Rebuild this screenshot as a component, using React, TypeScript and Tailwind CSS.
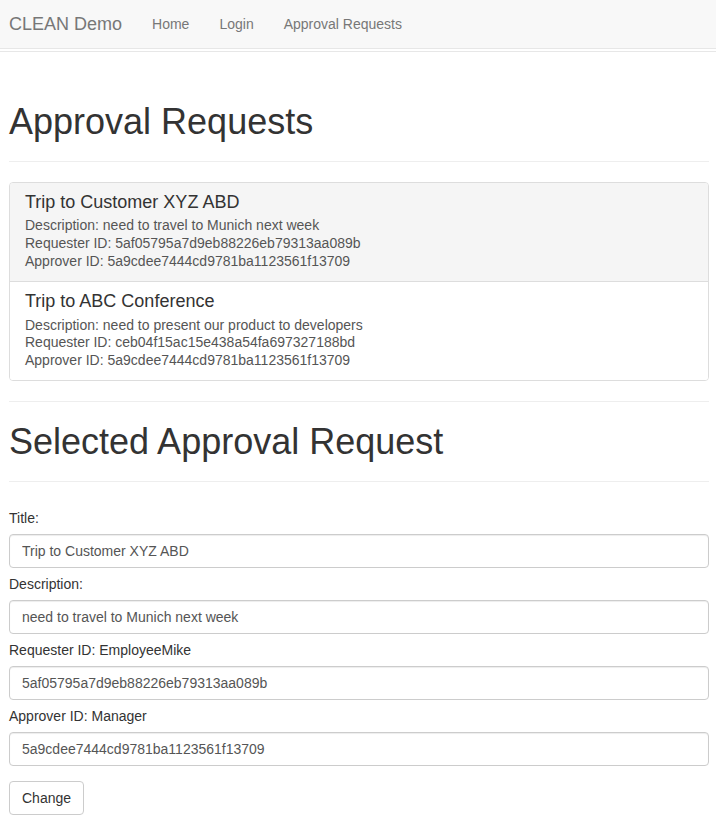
import React from "react";

const items = [
  {
    title: "Trip to Customer XYZ ABD",
    description: "need to travel to Munich next week",
    requester: "5af05795a7d9eb88226eb79313aa089b",
    approver: "5a9cdee7444cd9781ba1123561f13709",
    active: true,
  },
  {
    title: "Trip to ABC Conference",
    description: "need to present our product to developers",
    requester: "ceb04f15ac15e438a54fa697327188bd",
    approver: "5a9cdee7444cd9781ba1123561f13709",
    active: false,
  },
];

const fields = [
  { label: "Title:", value: "Trip to Customer XYZ ABD" },
  { label: "Description:", value: "need to travel to Munich next week" },
  { label: "Requester ID: EmployeeMike", value: "5af05795a7d9eb88226eb79313aa089b" },
  { label: "Approver ID: Manager", value: "5a9cdee7444cd9781ba1123561f13709" },
];

export default function App() {
  return (
    <div className="min-h-screen bg-white font-['Liberation_Sans',Arial,sans-serif] text-[14px] leading-[20px] text-[#333]">
      <nav className="flex h-[49px] items-center border-b border-[#e7e7e7] bg-[#f8f8f8] pl-[9px]">
        <span className="text-[18px] leading-[20px] text-[#777]">CLEAN Demo</span>
        <ul className="ml-[15px] flex">
          <li className="px-[15px] text-[#777]">Home</li>
          <li className="px-[15px] text-[#777]">Login</li>
          <li className="px-[15px] text-[#777]">Approval Requests</li>
        </ul>
      </nav>
      <div className="mt-[2px] border-t border-[#e7e7e7]" />
      <main className="pl-[9px] pr-[7px]">
        <div className="mt-[50px] border-b border-[#eee] pb-[9px]">
          <h1 className="mb-[10px] text-[36px] font-normal leading-[39.6px]">Approval Requests</h1>
        </div>
        <div className="mt-[20px] overflow-hidden rounded-[4px] border border-[#ddd]">
          {items.map((it, i) => (
            <div
              key={i}
              className={`px-[15px] py-[10px] ${i > 0 ? "border-t border-[#ddd]" : ""} ${
                it.active ? "bg-[#f5f5f5]" : "bg-white"
              }`}
            >
              <h4 className="mb-[5px] text-[18px] font-normal leading-[19.8px] text-[#333]">{it.title}</h4>
              <div className="leading-[17.8px] text-[#555]">
                <div>Description: {it.description}</div>
                <div>Requester ID: {it.requester}</div>
                <div>Approver ID: {it.approver}</div>
              </div>
            </div>
          ))}
        </div>
        <div className="mt-[20px] border-t border-[#eee]" />
        <div className="mt-[20px] border-b border-[#eee] pb-[9px]">
          <h1 className="mb-[10px] text-[36px] font-normal leading-[39.6px]">Selected Approval Request</h1>
        </div>
        <form className="mt-[20px] flex flex-col pb-[8px]" onSubmit={(e) => e.preventDefault()}>
          {fields.map((f, i) => (
            <div key={i} className="flex flex-col">
              <label className="mb-[6px] mt-[6px] block leading-[20px] text-[#333]">{f.label}</label>
              <input
                type="text"
                defaultValue={f.value}
                className="block h-[34px] w-full rounded-[4px] border border-[#ccc] bg-white px-[12px] text-[14px] text-[#555] shadow-[inset_0_1px_1px_rgba(0,0,0,0.075)] outline-none"
              />
            </div>
          ))}
          <button
            type="submit"
            className="mt-[15px] h-[34px] self-start rounded-[4px] border border-[#ccc] bg-white px-[12px] text-[14px] text-[#333]"
          >
            Change
          </button>
        </form>
      </main>
    </div>
  );
}
